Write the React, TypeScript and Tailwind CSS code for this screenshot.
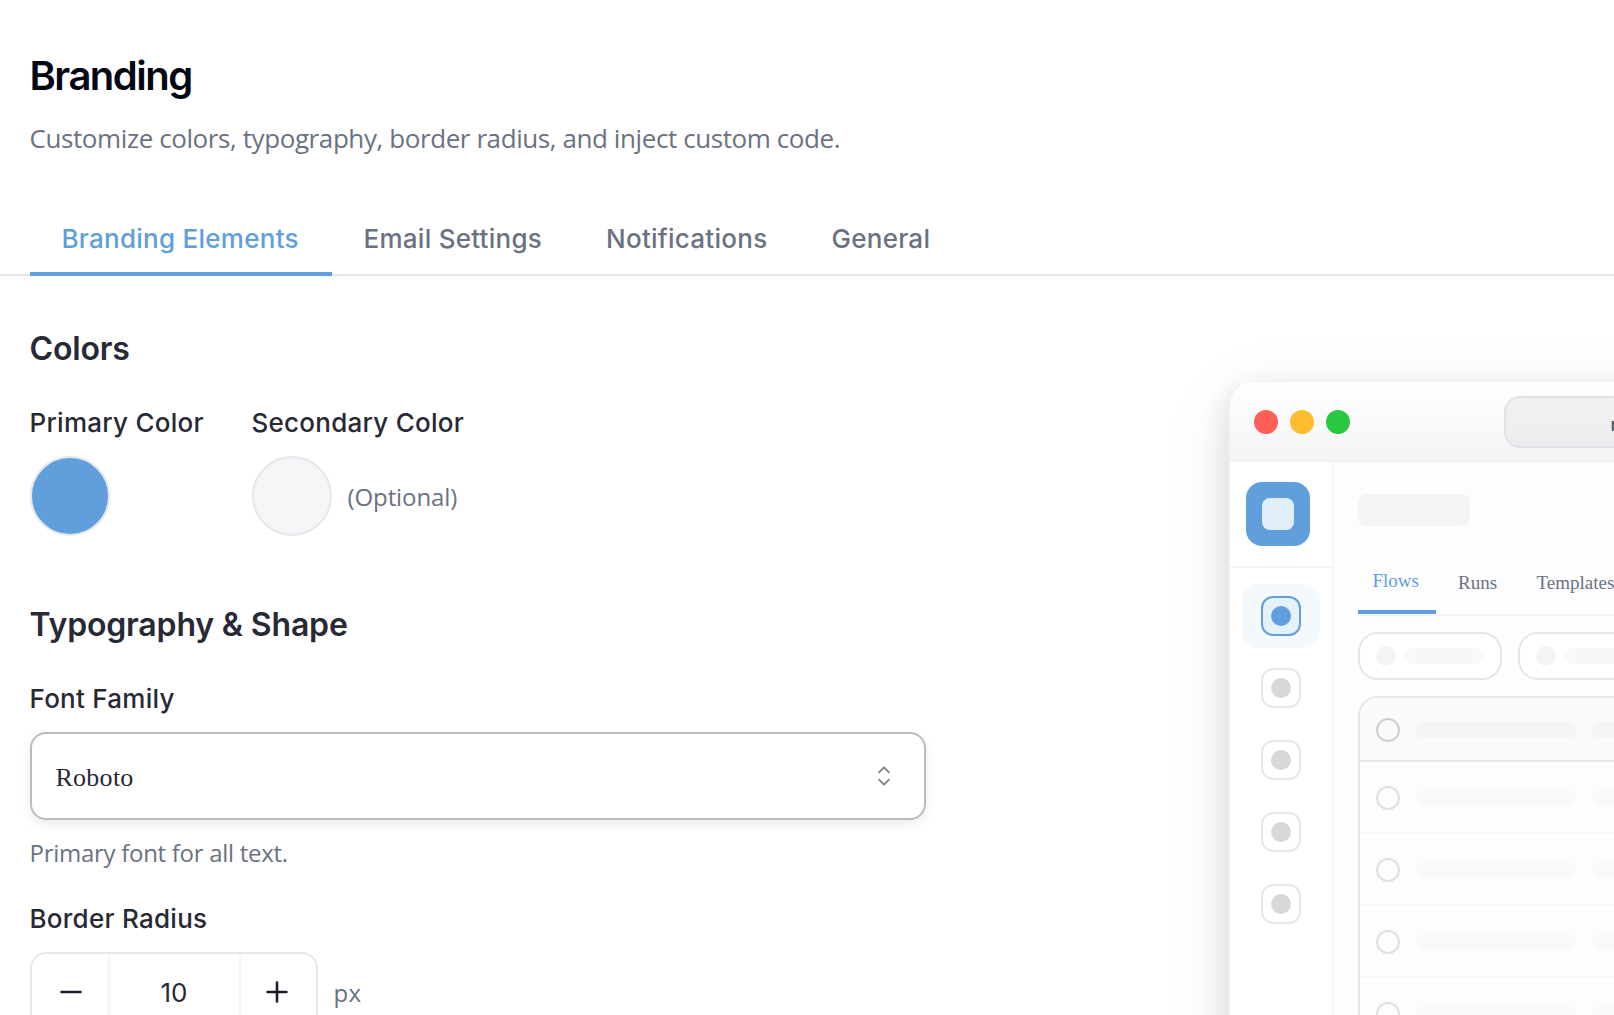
import { ReactNode, useState } from 'react'
import clsx from 'clsx'

const TABS = [
  { name: 'Branding Elements', width: 'w-[302px]' },
  { name: 'Email Settings', width: 'w-[242.5px]' },
  { name: 'Notifications', width: 'w-[225.5px]' },
  { name: 'General', width: 'w-[162px]' },
]

const PREVIEW_ROWS = [1, 2, 3, 4]
const PREVIEW_NAV = [1, 2, 3, 4]

type LabelProps = {
  children: ReactNode
}

function SectionTitle({ children }: LabelProps) {
  return (
    <h2 className="text-[32px] leading-10 font-semibold tracking-[-0.16px] text-[#272a35] whitespace-nowrap">
      {children}
    </h2>
  )
}

function FieldLabel({ children }: LabelProps) {
  return (
    <div className="text-[26px] leading-10 font-medium tracking-[0.26px] text-[#272a35] whitespace-nowrap">
      {children}
    </div>
  )
}

function Header() {
  return (
    <header className="pt-[52px] pl-[29.5px]">
      <h1 className="text-[40px] leading-[48px] font-semibold tracking-[-1.5px] text-[#030712]">
        Branding
      </h1>
      <p className="mt-[18px] font-['Open_Sans',sans-serif] text-[26px] leading-10 tracking-[-0.41px] text-gray-500 whitespace-nowrap">
        Customize colors, typography, border radius, and inject custom code.
      </p>
    </header>
  )
}

function Tabs() {
  const [active, setActive] = useState('Branding Elements')

  return (
    <nav className="mt-[44px] flex h-[74px] pl-[29.5px] shadow-[inset_0_-2px_0_#e5e7eb,0_2px_4px_rgba(0,0,0,0.04)]">
      {TABS.map((tab) => (
        <button
          key={tab.name}
          type="button"
          onClick={() => setActive(tab.name)}
          className={clsx(
            'border-b-4 px-8 pt-[17px] pb-[13px] text-left text-[26px] leading-10 font-medium tracking-[0.26px] whitespace-nowrap',
            tab.width,
            active === tab.name
              ? 'border-[#609edc] text-[#609edc]'
              : 'border-transparent text-gray-500',
          )}
        >
          {tab.name}
        </button>
      ))}
    </nav>
  )
}

function ColorFields() {
  return (
    <section>
      <SectionTitle>Colors</SectionTitle>
      <div className="mt-[34px] flex">
        <div className="w-[222px]">
          <FieldLabel>Primary Color</FieldLabel>
          <div className="mt-[13px] size-20 rounded-full border-2 border-gray-200 bg-[#609edc]" />
        </div>
        <div>
          <FieldLabel>Secondary Color</FieldLabel>
          <div className="mt-[13px] flex items-center gap-4">
            <div className="size-20 rounded-full border-2 border-gray-200 bg-[#f5f6f8]" />
            <span className="mt-[2px] font-['Open_Sans',sans-serif] text-2xl leading-9 tracking-[-0.1px] text-gray-500">
              (Optional)
            </span>
          </div>
        </div>
      </div>
    </section>
  )
}

function FontSelect() {
  return (
    <div className="flex h-[88px] w-[896px] items-center justify-between rounded-2xl border-2 border-[#bcbcbe] bg-white pr-[33px] pl-6 shadow-[0_4px_12px_rgba(0,0,0,0.08)]">
      <span className="mt-[3px] font-['Liberation_Serif',serif] text-[26px] leading-10 tracking-[0.26px] text-[#272a35]">
        Roboto
      </span>
      <svg
        className="h-5 w-[14px]"
        viewBox="0 0 14 20"
        fill="none"
        stroke="#808285"
        strokeWidth="1.8"
        strokeLinecap="round"
        strokeLinejoin="round"
      >
        <path d="M2 6.3 7 1.3l5 5M2 13.7l5 5 5-5" />
      </svg>
    </div>
  )
}

function RadiusStepper() {
  const [radius, setRadius] = useState(10)

  return (
    <div className="mt-[13px] flex h-20 items-center">
      <div className="flex h-20 w-[288px] overflow-hidden rounded-2xl border-2 border-gray-200">
        <button
          type="button"
          onClick={() => setRadius(radius - 1)}
          className="flex w-[78px] items-center justify-center"
        >
          <svg className="h-[22px] w-[22px]" viewBox="0 0 22 22" stroke="#1b1e28" strokeWidth="2.6" strokeLinecap="round">
            <path d="M1.5 11h19" />
          </svg>
        </button>
        <div className="-mt-[2px] w-[129px] border-t-2 border-[#d3d4d7] pt-[19px] text-center text-[26px] leading-10 text-[#272a35] shadow-[-2px_0_1px_#f6f6f7,2px_0_1px_#f6f6f7]">
          {radius}
        </div>
        <button
          type="button"
          onClick={() => setRadius(radius + 1)}
          className="flex w-[77px] items-center justify-center"
        >
          <svg className="h-[22px] w-[22px]" viewBox="0 0 22 22" stroke="#1b1e28" strokeWidth="2.6" strokeLinecap="round">
            <path d="M1.5 11h19M11 1.5v19" />
          </svg>
        </button>
      </div>
      <span className="mt-px ml-4 font-['Open_Sans',sans-serif] text-2xl leading-9 tracking-[0.4px] text-gray-500">
        px
      </span>
    </div>
  )
}

function TypographyFields() {
  return (
    <section className="mt-[69px]">
      <SectionTitle>Typography &amp; Shape</SectionTitle>
      <div className="mt-[34px] mb-[13px]">
        <FieldLabel>Font Family</FieldLabel>
      </div>
      <FontSelect />
      <p className="mt-[15px] mb-7 font-['Open_Sans',sans-serif] text-2xl leading-9 tracking-[-0.28px] text-gray-500 whitespace-nowrap">
        Primary font for all text.
      </p>
      <FieldLabel>Border Radius</FieldLabel>
      <RadiusStepper />
    </section>
  )
}

function PreviewTitleBar() {
  return (
    <div className="flex h-20 items-center border-b-2 border-[#f0f1f3] bg-gradient-to-b from-white to-[#f3f4f6] pt-0.5 pl-6">
      <div className="flex gap-3">
        <span className="size-6 rounded-full bg-[#ff5f57]" />
        <span className="size-6 rounded-full bg-[#febc2e]" />
        <span className="size-6 rounded-full bg-[#28c840]" />
      </div>
      <div className="ml-[154px] flex h-[52px] w-[480px] shrink-0 items-center rounded-2xl border-2 border-[#e0e2e6] bg-gradient-to-b from-[#f1f2f3] to-[#ebecee] pt-1.5 pl-[105px] text-lg font-medium text-gray-600">
        myapp.com
      </div>
    </div>
  )
}

function PreviewSidebar() {
  return (
    <aside className="w-[104px] shrink-0 border-r-2 border-[#f5f5f7] bg-white">
      <div className="flex h-[106px] items-start border-b-2 border-[#f5f5f7] pt-5 pl-4">
        <div className="flex size-16 items-center justify-center rounded-2xl bg-[#609edc]">
          <div className="size-8 rounded-lg bg-[#dfeef8]" />
        </div>
      </div>
      <div className="flex flex-col gap-2 px-3 pt-4">
        <div className="flex h-16 items-center justify-center rounded-2xl bg-[#f4f9fd]">
          <div className="flex size-10 items-center justify-center rounded-xl border-2 border-[#609edc] bg-[#e4f1fa]">
            <div className="size-5 rounded-full bg-[#609edc]" />
          </div>
        </div>
        {PREVIEW_NAV.map((item) => (
          <div key={item} className="flex h-16 items-center justify-center">
            <div className="flex size-10 items-center justify-center rounded-xl border-2 border-gray-200">
              <div className="size-5 rounded-full bg-[#d7d8da]" />
            </div>
          </div>
        ))}
      </div>
    </aside>
  )
}

function PreviewChip() {
  return (
    <div className="flex h-12 w-36 shrink-0 items-center gap-2 rounded-[20px] border-2 border-gray-200 bg-white pl-4">
      <div className="size-5 rounded-full bg-[#f3f4f6]" />
      <div className="h-4 w-20 rounded-full bg-[#f8f8f9]" />
    </div>
  )
}

function PreviewTable() {
  return (
    <div className="mt-4 w-[600px] overflow-hidden rounded-t-[20px] border-2 border-b-0 border-gray-200">
      <div className="flex h-16 items-center gap-4 border-b-2 border-gray-200 bg-[#fafafa] pt-0.5 pl-4">
        <div className="size-6 shrink-0 rounded-full border-2 border-[#cdced2]" />
        <div className="h-4 w-40 rounded-full bg-[#f3f4f6]" />
        <div className="h-4 w-40 rounded-full bg-[#f3f4f6]" />
      </div>
      {PREVIEW_ROWS.map((row) => (
        <div key={row} className="flex h-[72px] items-center gap-4 border-b-2 border-[#f6f6f8] pt-0.5 pl-4">
          <div className="size-6 shrink-0 rounded-full border-2 border-[#e0e1e5]" />
          <div className="h-4 w-40 rounded-full bg-[#f9f9f9]" />
          <div className="h-4 w-40 rounded-full bg-[#f9f9f9]" />
        </div>
      ))}
    </div>
  )
}

function PreviewContent() {
  return (
    <div className="min-w-0 flex-1 overflow-hidden bg-[#fdfdfd] pt-8 pl-6">
      <div className="h-8 w-28 rounded-lg bg-[#f3f4f6]" />
      <div className="mt-7 flex h-[62px] w-[600px] border-b-2 border-[#f3f4f6] font-['Liberation_Serif',serif] text-[19px] leading-6 text-gray-500">
        <div className="h-[60px] w-[78px] border-b-4 border-[#609edc] pt-[15px] pl-[15px] text-[#609edc]">
          Flows
        </div>
        <div className="pt-[17px] pl-[22.5px]">Runs</div>
        <div className="pt-[17px] pl-[39.5px]">Templates</div>
      </div>
      <div className="mt-4 flex gap-4">
        <PreviewChip />
        <PreviewChip />
      </div>
      <PreviewTable />
    </div>
  )
}

function BrandingPreview() {
  return (
    <div className="mt-[106px] ml-[302px] flex h-[1000px] w-[900px] shrink-0 flex-col overflow-hidden rounded-3xl border-l-2 border-[#eff0f2] bg-white shadow-[0_16px_80px_rgba(0,0,0,0.07),0_10px_28px_rgba(10,20,40,0.14)]">
      <PreviewTitleBar />
      <div className="flex flex-1">
        <PreviewSidebar />
        <PreviewContent />
      </div>
    </div>
  )
}

export default function App() {
  return (
    <div className="h-[1015px] w-full overflow-hidden bg-white font-['Inter',sans-serif]">
      <Header />
      <Tabs />
      <main className="flex">
        <div className="ml-[29.5px] w-[896px] shrink-0 pt-[53px]">
          <ColorFields />
          <TypographyFields />
        </div>
        <BrandingPreview />
      </main>
    </div>
  )
}
